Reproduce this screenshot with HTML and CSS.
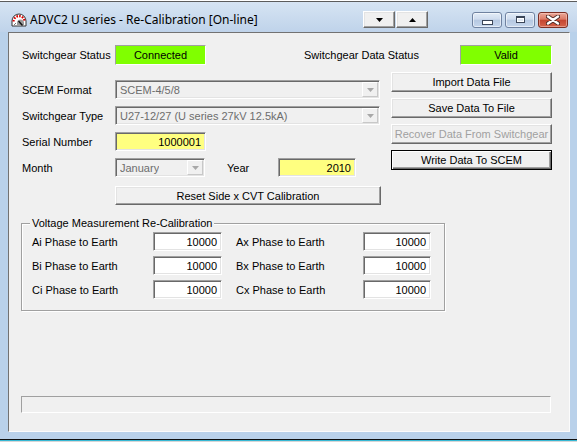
FILE: index.html
```html
<!DOCTYPE html>
<html>
<head>
<meta charset="utf-8">
<title>ADVC2 U series - Re-Calibration</title>
<link rel="stylesheet" href="styles.css">
</head>
<body>
<div class="window">
  <div class="titlebar">
    <svg class="app-icon" width="16" height="16" viewBox="0 0 16 16">
      <path d="M1 14 L1 9 A7 7 0 0 1 15 9 L15 14 Z" fill="#fff" stroke="#333" stroke-width="1"/>
      <path d="M2.6 9.5 A5.4 5.4 0 0 1 13.4 9.5" fill="none" stroke="#d40000" stroke-width="2.2" stroke-dasharray="1.6 1.2"/>
      <path d="M6 14 L6 11 A3.5 3.5 0 0 1 13 11 L13 14 Z" fill="#9a9a9a"/>
      <path d="M7.5 9 L11.5 13.5" stroke="#111" stroke-width="1.4"/>
      <path d="M3 12 L4 13 M4 11 L5 12" stroke="#555" stroke-width="0.8"/>
    </svg>
    <span class="title">ADVC2 U series - Re-Calibration [On-line]</span>
    <div class="nav-btns">
      <button class="nav-btn" type="button"><svg width="7" height="4" viewBox="0 0 7 4"><path d="M0 0 H7 L3.5 4 Z" fill="#000"/></svg></button>
      <button class="nav-btn" type="button"><svg width="7" height="4" viewBox="0 0 7 4"><path d="M0 4 H7 L3.5 0 Z" fill="#000"/></svg></button>
    </div>
    <div class="caption-btns">
      <span class="cap"><span class="glyph-min"></span></span>
      <span class="cap"><span class="glyph-max"></span></span>
      <span class="cap close">
        <svg width="14" height="10" viewBox="0 0 14 10">
          <path d="M2 1.5 L12 8.5 M12 1.5 L2 8.5" stroke="#4a2a25" stroke-width="4.2" stroke-linecap="round"/>
          <path d="M2 1.5 L12 8.5 M12 1.5 L2 8.5" stroke="#fff" stroke-width="2.4" stroke-linecap="round"/>
        </svg>
      </span>
    </div>
  </div>

  <div class="frame">
    <div class="client">
      <div class="status-row">
        <span class="label lbl-status">Switchgear Status</span>
        <div class="indicator">Connected</div>
        <span class="label lbl-data">Switchgear Data Status</span>
        <div class="indicator valid">Valid</div>
      </div>

      <div class="main">
        <div class="form">
          <span class="label">SCEM Format</span>
          <div class="combo wide">
            <span class="combo-text">SCEM-4/5/8</span>
            <span class="combo-btn"><svg width="7" height="4" viewBox="0 0 7 4"><path d="M0 0 H7 L3.5 4 Z" fill="#a8a8a8"/></svg></span>
          </div>

          <span class="label">Switchgear Type</span>
          <div class="combo wide">
            <span class="combo-text">U27-12/27 (U series 27kV 12.5kA)</span>
            <span class="combo-btn"><svg width="7" height="4" viewBox="0 0 7 4"><path d="M0 0 H7 L3.5 4 Z" fill="#a8a8a8"/></svg></span>
          </div>

          <span class="label">Serial Number</span>
          <div class="field yellow serial">1000001</div>

          <span class="label">Month</span>
          <div class="month-row">
            <div class="combo month">
              <span class="combo-text">January</span>
              <span class="combo-btn"><svg width="7" height="4" viewBox="0 0 7 4"><path d="M0 0 H7 L3.5 4 Z" fill="#a8a8a8"/></svg></span>
            </div>
            <span class="label lbl-year">Year</span>
            <div class="field yellow year">2010</div>
          </div>

          <button class="btn reset" type="button">Reset Side x CVT Calibration</button>
        </div>

        <div class="actions">
          <button class="btn" type="button">Import Data File</button>
          <button class="btn" type="button">Save Data To File</button>
          <button class="btn" type="button" disabled>Recover Data From Switchgear</button>
          <button class="btn default" type="button">Write Data To SCEM</button>
        </div>
      </div>

      <fieldset class="group">
        <legend>Voltage Measurement Re-Calibration</legend>
        <div class="cal-grid">
          <span class="label">Ai Phase to Earth</span>
          <div class="field">10000</div>
          <span class="label col2">Ax Phase to Earth</span>
          <div class="field">10000</div>

          <span class="label">Bi Phase to Earth</span>
          <div class="field">10000</div>
          <span class="label col2">Bx Phase to Earth</span>
          <div class="field">10000</div>

          <span class="label">Ci Phase to Earth</span>
          <div class="field">10000</div>
          <span class="label col2">Cx Phase to Earth</span>
          <div class="field">10000</div>
        </div>
      </fieldset>

      <div class="statusbar"></div>
    </div>
  </div>
  <div class="bottom-edge"></div>
</div>
</body>
</html>
```

FILE: styles.css
```css
html, body {
  margin: 0;
  padding: 0;
  background: #fff;
}

body {
  width: 577px;
  height: 442px;
  overflow: hidden;
  font-family: "Liberation Sans", Arial, sans-serif;
  font-size: 11px;
  color: #000;
}

button {
  font: inherit;
  color: inherit;
  margin: 0;
  padding: 0;
}

/* ---- window chrome ---- */
.window {
  margin-top: 1px;
  height: 441px;
  box-sizing: border-box;
  border-top: 1px solid #5c5c5c;
  display: flex;
  flex-direction: column;
  background: #b9d1ea;
}

.titlebar {
  height: 30px;
  flex: none;
  box-sizing: border-box;
  padding: 5px 9px 0 11px;
  display: flex;
  align-items: center;
  background: linear-gradient(#d6e4f3, #bfd3ea);
}

.app-icon {
  flex: none;
}

.title {
  margin-left: 3px;
  font-family: "Noto Sans", "Open Sans", sans-serif;
  font-size: 12px;
  color: #000;
  white-space: nowrap;
}

.nav-btns {
  margin-left: auto;
  display: flex;
  gap: 1px;
}

.nav-btn {
  width: 32px;
  height: 17px;
  box-sizing: border-box;
  background: #f0f0f0;
  border: 1px solid;
  border-color: #fff #696969 #696969 #fff;
  box-shadow: inset -1px -1px #a0a0a0, inset 1px 1px #e3e3e3;
  display: flex;
  align-items: center;
  justify-content: center;
}

.caption-btns {
  margin-left: 44px;
  display: flex;
  gap: 3px;
}

.cap {
  width: 30px;
  height: 16px;
  box-sizing: border-box;
  border: 1px solid #6f82a0;
  border-radius: 3px;
  background: linear-gradient(#e3ecf7 0%, #cfdcee 45%, #b5c8e1 50%, #c6d7ec 100%);
  box-shadow: inset 0 0 0 1px rgba(255, 255, 255, 0.55);
  display: flex;
  align-items: center;
  justify-content: center;
}

.cap.close {
  border-color: #7c2f24;
  background: linear-gradient(#eaa898 0%, #dc7a66 45%, #c4442f 50%, #d5644b 100%);
  box-shadow: inset 0 0 0 1px rgba(255, 220, 210, 0.45);
}

.glyph-min {
  width: 9px;
  height: 3px;
  margin-top: 5px;
  border: 1px solid #3b4658;
  background: #fff;
}

.glyph-max {
  width: 7px;
  height: 4px;
  border: 1px solid #3b4658;
  border-top-width: 2px;
  background: #dfe8f3;
  box-shadow: inset 0 0 0 1px #fff;
}

.frame {
  height: 400px;
  flex: none;
  padding: 0 7px 0 8px;
  display: flex;
}

.bottom-edge {
  margin-top: 7px;
  height: 3px;
  box-sizing: border-box;
  border-top: 1px solid #101010;
  border-bottom: 1px solid #d6d6d6;
  background: #35b8d4;
}

/* ---- dialog client area ---- */
.client {
  flex: 1;
  box-sizing: border-box;
  border: 1px solid;
  border-color: #727272 #fbfbfb #fbfbfb #727272;
  background: #f0f0f0;
  padding: 12px 17px 18px 12px;
  display: flex;
  flex-direction: column;
}

.label {
  white-space: nowrap;
  padding-left: 1px;
}

.status-row {
  height: 20px;
  display: flex;
  align-items: center;
}

.lbl-status {
  width: 93px;
}

.lbl-data {
  margin-left: 97px;
  width: 156px;
}

.indicator {
  width: 91px;
  height: 20px;
  box-sizing: border-box;
  border: 1px solid;
  border-color: #a0a0a0 #fff #fff #a0a0a0;
  background: #80ff00;
  display: flex;
  align-items: center;
  justify-content: center;
}

.indicator.valid {
  width: 92px;
}

.main {
  margin-top: 7px;
  display: flex;
  align-items: flex-start;
}

.form {
  margin-top: 8px;
  width: 360px;
  display: grid;
  grid-template-columns: 94px 266px;
  grid-auto-rows: 19px;
  row-gap: 7px;
  align-items: center;
}

/* sunken edit / combo edge */
.combo,
.field {
  height: 19px;
  box-sizing: border-box;
  border: 1px solid;
  border-color: #a0a0a0 #fff #fff #a0a0a0;
  box-shadow: inset 1px 1px #696969, inset -1px -1px #e3e3e3;
  display: flex;
  align-items: center;
}

.combo {
  background: #f0f0f0;
  color: #6d6d6d;
  padding-left: 4px;
}

.combo.wide {
  width: 265px;
}

.combo.month {
  width: 90px;
}

.combo-text {
  white-space: nowrap;
  overflow: hidden;
}

.combo-btn {
  margin-left: auto;
  margin-right: 1px;
  width: 16px;
  height: 15px;
  box-sizing: border-box;
  border: 1px solid;
  border-color: #fff #c8c8c8 #c8c8c8 #fff;
  background: #f0f0f0;
  display: flex;
  align-items: center;
  justify-content: center;
}

.field {
  background: #fff;
  justify-content: flex-end;
  padding-right: 4px;
}

.field.yellow {
  background: #ffff80;
}

.field.serial {
  width: 91px;
}

.month-row {
  display: flex;
  align-items: center;
}

.lbl-year {
  margin-left: 21px;
  width: 51px;
}

.field.year {
  width: 78px;
}

/* raised push buttons */
.btn {
  height: 20px;
  box-sizing: border-box;
  background: #f0f0f0;
  border: 1px solid;
  border-color: #fff #696969 #696969 #fff;
  box-shadow: inset -1px -1px #a0a0a0, inset 1px 1px #e3e3e3;
  white-space: nowrap;
  text-align: center;
}

.btn:disabled {
  color: #a0a0a0;
}

.btn.default {
  border-color: #000;
  box-shadow: inset 1px 1px #fff, inset -1px -1px #696969, inset -2px -2px #a0a0a0;
}

.btn.reset {
  grid-column: 2;
  align-self: start;
  margin-top: 2px;
  height: 19px;
  width: 266px;
}

.actions {
  margin-left: 10px;
  width: 161px;
  display: flex;
  flex-direction: column;
  gap: 6px;
}

/* group box */
.group {
  margin: 14px 0 0 0;
  width: 424px;
  min-width: 0;
  box-sizing: border-box;
  padding: 2px 12px 11px 10px;
  border: 1px solid #a0a0a0;
  box-shadow: inset 1px 1px #fff, 1px 1px #fff;
}

.group legend {
  margin-left: -2px;
  padding: 0 2px;
  line-height: 13px;
  background: #f0f0f0;
}

.cal-grid {
  display: grid;
  grid-template-columns: 121px 69px 141px 68px;
  grid-auto-rows: 19px;
  row-gap: 5px;
  align-items: center;
}

.cal-grid .label {
  padding-left: 0;
}

.cal-grid .col2 {
  padding-left: 14px;
}

.statusbar {
  margin-top: auto;
  width: 530px;
  height: 17px;
  box-sizing: border-box;
  border: 1px solid;
  border-color: #a0a0a0 #fff #fff #a0a0a0;
}
```
